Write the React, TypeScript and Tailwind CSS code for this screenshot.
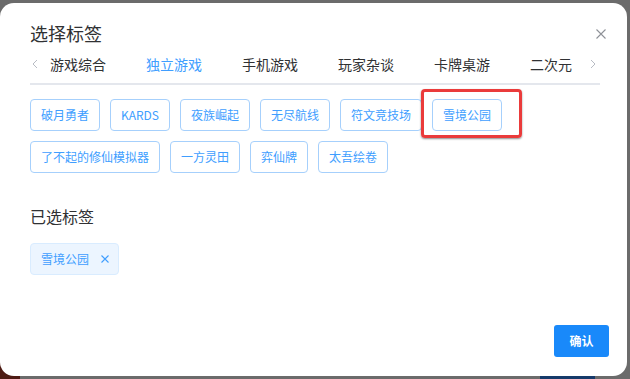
import React from "react";

const tabs = ["游戏综合", "独立游戏", "手机游戏", "玩家杂谈", "卡牌桌游", "二次元"];
const row = ["破月勇者", "KARDS", "夜族崛起", "无尽航线", "符文竞技场", "雪境公园", "了不起的修仙模拟器", "一方灵田", "弈仙牌", "太吾绘卷"];

function Chevron({ dir }: { dir: "left" | "right" }) {
  return (
    <svg width="6" height="10" viewBox="0 0 6 10" className="shrink-0">
      <polyline
        points={dir === "left" ? "5,1 1,5 5,9" : "1,1 5,5 1,9"}
        fill="none"
        stroke="#b8bcc4"
        strokeWidth="1"
      />
    </svg>
  );
}

export default function App() {
  return (
    <div
      className="relative w-[630px] h-[379px] bg-[#6b6b6b] pt-[3px] overflow-hidden"
      style={{ fontFamily: '"Noto Sans CJK SC", "Noto Sans", sans-serif' }}
    >
      <div className="absolute left-0 bottom-0 w-[20px] h-[20px] bg-[#4e1c14]" />
      <div className="absolute left-[540px] bottom-0 w-[55px] h-[4px] bg-[#163a6a]" />
      <div className="relative w-[627px] h-[373px] bg-white rounded-[14px] flex flex-col pl-[30px] pt-[18px]">
        <div className="flex items-center justify-between pr-[21px]">
          <div className="text-[18px] leading-[24px] text-[#303133]">选择标签</div>
          <svg width="10" height="10" viewBox="0 0 10 10" className="mt-[1px]">
            <path d="M0.5 0.5 L9.5 9.5 M9.5 0.5 L0.5 9.5" stroke="#8e9197" strokeWidth="1.1" />
          </svg>
        </div>
        <div className="mr-[27px] h-[40px] flex items-center border-b-2 border-[#e4e7ed]">
          <div className="w-[20px] pl-[2px] flex items-center">
            <Chevron dir="left" />
          </div>
          <div className="flex-1 h-full flex gap-[40px] overflow-hidden">
            {tabs.map((t, i) => (
              <div
                key={t}
                className={`relative h-full flex items-center shrink-0 text-[14px] ${
                  i === 1 ? "text-[#409eff]" : "text-[#303133]"
                }`}
              >
                {t}
                {i === 1 && <div className="absolute left-0 right-0 bottom-[-2px] h-[2px] bg-[#409eff]" />}
              </div>
            ))}
          </div>
          <div className="w-[10px] flex items-center">
            <Chevron dir="right" />
          </div>
        </div>
        <div className="mt-[14px] w-[570px] flex flex-wrap gap-[10px]">
          {row.map((t) => (
            <div key={t} className="relative">
              <div className="h-[32px] px-[10px] flex items-center border border-[#a6d0fc] rounded-[4px] text-[12px] text-[#409eff] whitespace-nowrap">
                {t}
              </div>
              {t === "雪境公园" && (
                <div className="absolute left-[-11px] top-[-10px] w-[101px] h-[49px] border-[3px] border-[#ea3b3b] rounded-[4px] shadow-[0_1px_2px_rgba(0,0,0,0.45)]" />
              )}
            </div>
          ))}
        </div>
        <div className="mt-[31px] text-[16px] leading-[24px] text-[#303133]">已选标签</div>
        <div className="mt-[15px] flex">
          <div className="h-[32px] pl-[10px] pr-[9px] flex items-center gap-[12px] bg-[#ecf5ff] border border-[#d9ecff] rounded-[4px] text-[12px] text-[#409eff]">
            <span>雪境公园</span>
            <svg width="8" height="8" viewBox="0 0 8 8">
              <path d="M0.5 0.5 L7.5 7.5 M7.5 0.5 L0.5 7.5" stroke="#409eff" strokeWidth="1.1" />
            </svg>
          </div>
        </div>
        <div className="mt-auto pb-[19px] pr-[18px] flex justify-end">
          <button className="w-[55px] h-[32px] bg-[#1989fa] rounded-[3px] text-white text-[12px] font-bold flex items-center justify-center">
            确认
          </button>
        </div>
      </div>
    </div>
  );
}
